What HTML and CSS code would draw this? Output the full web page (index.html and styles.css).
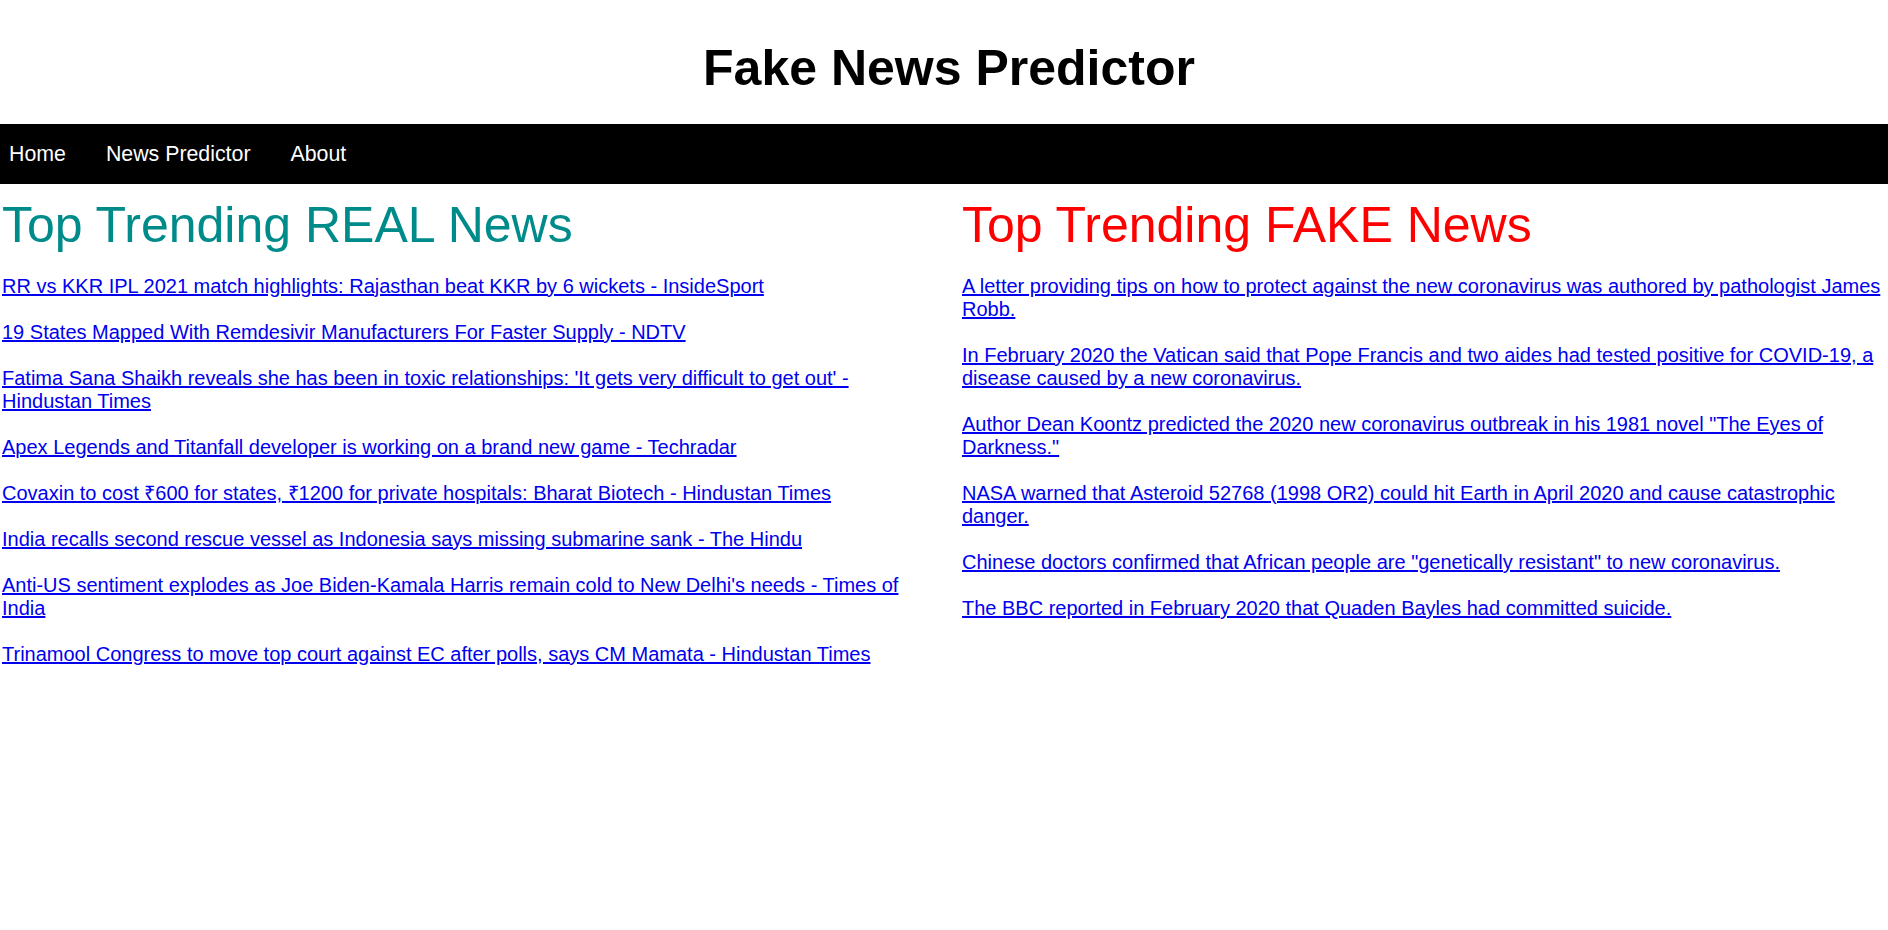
FILE: index.html
```html
<!DOCTYPE html>
<html lang="en">
<head>
<meta charset="utf-8">
<title>Fake News Predictor</title>
<link rel="stylesheet" href="styles.css">
</head>
<body>
<header class="header">
  <h1 class="title">Fake News Predictor</h1>
</header>
<nav class="nav">
  <a class="nav-link" href="#">Home</a>
  <a class="nav-link" href="#">News Predictor</a>
  <a class="nav-link" href="#">About</a>
</nav>
<main class="columns">
  <section class="column">
    <h2 class="heading heading-real">Top Trending REAL News</h2>
    <ul class="news-list">
      <li><a href="#">RR vs KKR IPL 2021 match highlights: Rajasthan beat KKR by 6 wickets - InsideSport</a></li>
      <li><a href="#">19 States Mapped With Remdesivir Manufacturers For Faster Supply - NDTV</a></li>
      <li><a href="#">Fatima Sana Shaikh reveals she has been in toxic relationships: 'It gets very difficult to get out' - Hindustan Times</a></li>
      <li><a href="#">Apex Legends and Titanfall developer is working on a brand new game - Techradar</a></li>
      <li><a href="#">Covaxin to cost ₹600 for states, ₹1200 for private hospitals: Bharat Biotech - Hindustan Times</a></li>
      <li><a href="#">India recalls second rescue vessel as Indonesia says missing submarine sank - The Hindu</a></li>
      <li><a href="#">Anti-US sentiment explodes as Joe Biden-Kamala Harris remain cold to New Delhi's needs - Times of India</a></li>
      <li><a href="#">Trinamool Congress to move top court against EC after polls, says CM Mamata - Hindustan Times</a></li>
    </ul>
  </section>
  <section class="column">
    <h2 class="heading heading-fake">Top Trending FAKE News</h2>
    <ul class="news-list news-list-fake">
      <li><a href="#">A letter providing tips on how to protect against the new coronavirus was authored by pathologist James Robb.</a></li>
      <li><a href="#">In February 2020 the Vatican said that Pope Francis and two aides had tested positive for COVID-19, a disease caused by a new coronavirus.</a></li>
      <li><a href="#">Author Dean Koontz predicted the 2020 new coronavirus outbreak in his 1981 novel "The Eyes of Darkness."</a></li>
      <li><a href="#">NASA warned that Asteroid 52768 (1998 OR2) could hit Earth in April 2020 and cause catastrophic danger.</a></li>
      <li><a href="#">Chinese doctors confirmed that African people are "genetically resistant" to new coronavirus.</a></li>
      <li><a href="#">The BBC reported in February 2020 that Quaden Bayles had committed suicide.</a></li>
    </ul>
  </section>
</main>
</body>
</html>
```

FILE: styles.css
```css
html, body {
  margin: 0;
  padding: 0;
  background: #ffffff;
}

body {
  font-family: "Liberation Sans", Arial, sans-serif;
  color: #000000;
}

.header {
  padding: 40px 0 27px 10px;
  text-align: center;
}

.title {
  margin: 0;
  font-size: 50px;
  font-weight: bold;
  line-height: 57px;
}

.nav {
  display: flex;
  align-items: center;
  height: 60px;
  background: #000000;
  padding-left: 9px;
  gap: 40px;
}

.nav-link {
  color: #ffffff;
  text-decoration: none;
  font-size: 21.33px;
}

.columns {
  display: grid;
  grid-template-columns: 940px 1fr;
  column-gap: 20px;
  padding: 0 4px 0 2px;
}

.heading {
  margin: 13px 0 21px 0;
  font-size: 50px;
  font-weight: normal;
  line-height: 57px;
}

.heading-real {
  color: #008b8b;
}

.heading-fake {
  color: #ff0000;
}

.news-list {
  list-style: none;
  margin: 0;
  padding: 0;
  font-size: 20px;
  line-height: 23px;
}

.news-list-fake {
  margin-top: 3px;
}

.news-list li {
  margin-bottom: 23px;
}

.news-list a {
  color: #0000ee;
  text-decoration: underline;
}
```
